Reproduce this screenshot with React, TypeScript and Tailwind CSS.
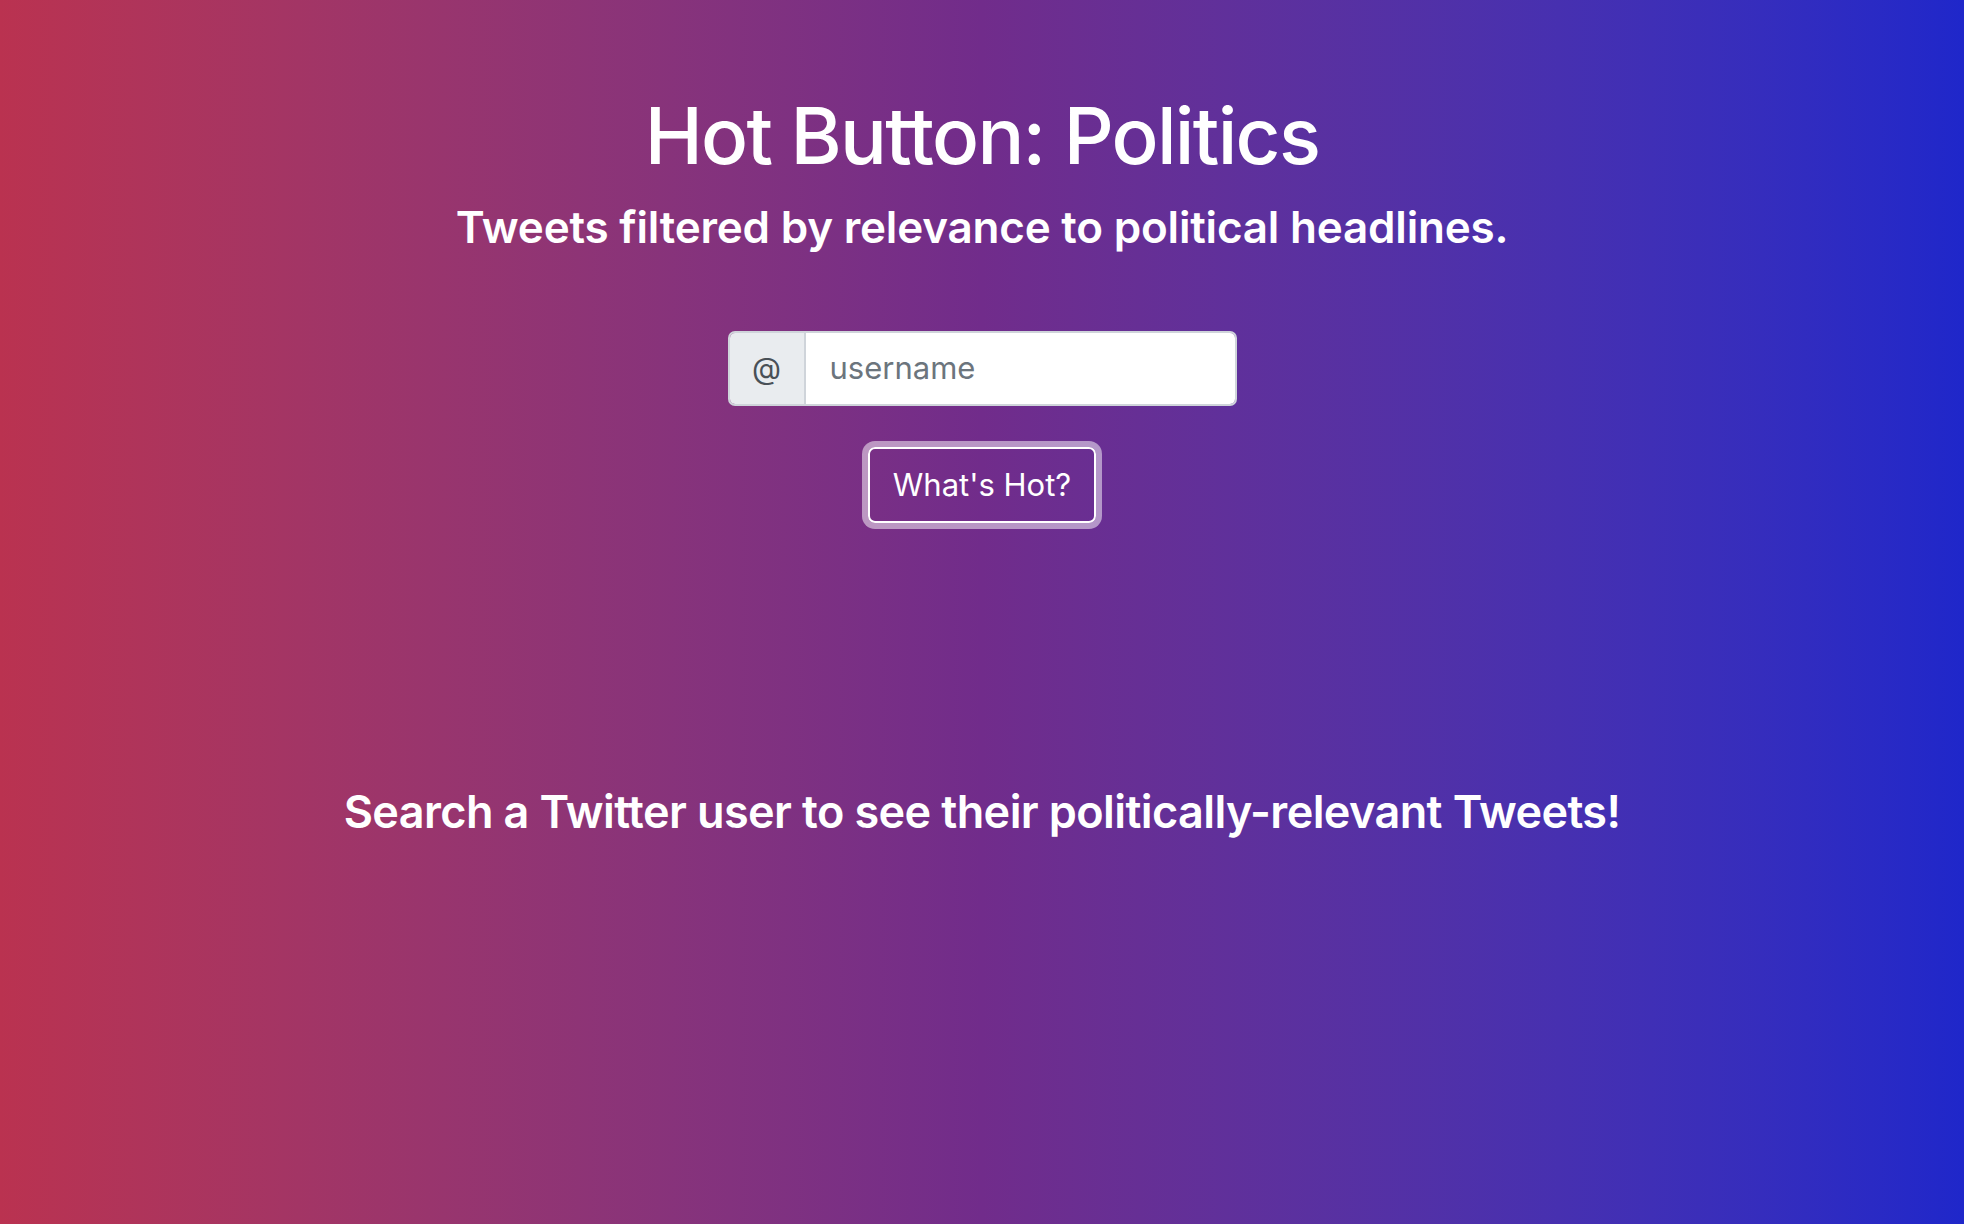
import { useState } from "react"

const App = () => {
    const [username, setUsername] = useState("")
    return <div className="min-h-screen w-full bg-gradient-to-r from-[#ba3250] via-[#712c8b] to-[#1f27ca] font-['Inter',sans-serif] text-white">
        <div className="flex flex-col items-center pt-[88px]">
            <h1 className="text-[78px] leading-[96px] font-medium tracking-[-1.7px]">Hot Button: Politics</h1>
            <h2 className="mt-[17px] text-[44px] leading-[53px] font-semibold tracking-[-0.2px]">Tweets filtered by relevance to political headlines.</h2>
            <form className="mt-[77px] flex flex-col items-center" onSubmit={(e) => e.preventDefault()}>
                <div className="flex h-[75px] w-[509px] overflow-hidden rounded-[7px] border-2 border-[#cfd4da]">
                    <span className="flex w-[76px] shrink-0 items-center justify-center border-r-2 border-[#cfd4da] bg-[#e9ecef] text-[30px] text-[#495057]">@</span>
                    <input
                        className="min-w-0 flex-1 bg-white px-[24px] text-[31px] text-[#495057] placeholder-[#6c757d] outline-none"
                        placeholder="username"
                        value={username}
                        onChange={(e) => setUsername(e.target.value)}
                    />
                </div>
                <button className="mt-[41px] h-[76px] w-[228px] rounded-[7px] border-2 border-white text-[31px] text-white ring-[6px] ring-white/50">
                    What's Hot?
                </button>
            </form>
            <p className="mt-[261px] text-[45px] leading-[55px] font-semibold tracking-[-0.6px]">Search a Twitter user to see their politically-relevant Tweets!</p>
        </div>
    </div>
}

export default App
